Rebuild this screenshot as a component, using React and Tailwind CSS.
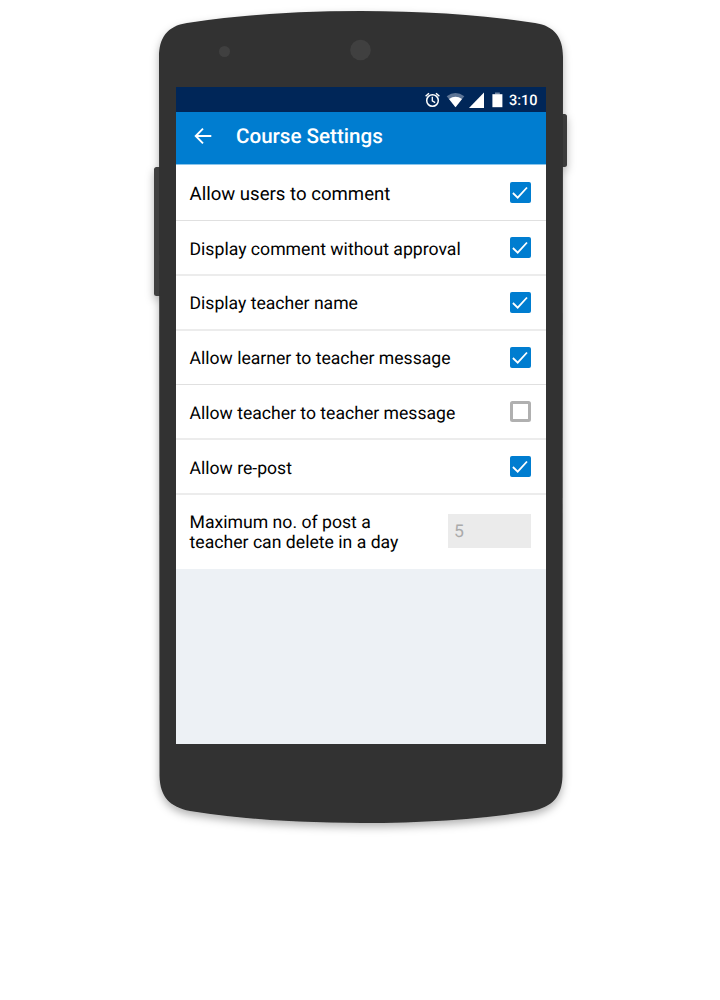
const settings = [
  { label: "Allow users to comment", checked: true, size: "h-14 border-b border-[#e0e0e0]", text: "mt-[2px] text-[18.600px]" },
  { label: "Display comment without approval", checked: true, size: "h-[55px] border-b-2 border-[#ececec]", text: "mt-[4px] text-[17.650px]" },
  { label: "Display teacher name", checked: true, size: "h-[55px] border-b-2 border-[#ececec]", text: "mt-[3px] text-[17.600px]" },
  { label: "Allow learner to teacher message", checked: true, size: "h-[54px] border-b border-[#e0e0e0]", text: "mt-[2px] text-[17.600px]" },
  { label: "Allow teacher to teacher message", checked: false, size: "h-[55px] border-b-2 border-[#ececec]", text: "mt-[4px] text-[17.600px]" },
  { label: "Allow re-post", checked: true, size: "h-[55px] border-b-2 border-[#ececec]", text: "mt-[4px] text-[17.600px]" },
];

function PhoneBody() {
  return (
    <svg className="absolute inset-0" width="720" height="1000" viewBox="0 0 720 1000" aria-hidden="true">
      <defs>
        <filter id="shadow" x="-20%" y="-20%" width="140%" height="140%">
          <feDropShadow dx="0" dy="4" stdDeviation="4" floodColor="#000" floodOpacity="0.3" />
        </filter>
      </defs>
      <g filter="url(#shadow)">
        <rect x="154" y="167" width="10" height="129" rx="2.500" fill="#404040" />
        <rect x="556" y="114" width="11" height="53" rx="2.500" fill="#3a3a3a" />
        <path
          d="M159 57C159 38 167 26 187 23Q265 11 361 11Q457 11 535 23C555 26 563 38 563 57L562.500 776C562 797 552 807 532 811Q457 823 361 823Q265 823 190 811C170 807 160 797 159.500 776Z"
          fill="#323232"
        />
      </g>
      <circle cx="224.500" cy="51.500" r="5.500" fill="#404040" />
      <circle cx="360.500" cy="50" r="10.300" fill="#404040" />
    </svg>
  );
}

function StatusBar() {
  return (
    <div className="flex h-[25px] items-center bg-[#002658] pl-[248px] text-white">
      <svg width="82" height="25" viewBox="0 0 82 25" aria-hidden="true">
        <g fill="none" stroke="#fff" strokeWidth="1.500">
          <circle cx="8.500" cy="13.500" r="5.800" />
          <path d="M8.300 9.800v4l2.900 1.800" strokeWidth="1.300" />
          <path d="M1.600 9.200L5 6.200M15.400 9.200L12 6.200" />
        </g>
        <path d="M22.700 9.300Q31.500 2.700 40.300 9.300L31.500 20.200Z" fill="#5d7596" />
        <path d="M25 12Q31.500 7.400 38 12L31.500 20.200Z" fill="#fff" />
        <path d="M60 5.500V21H45Z" fill="#fff" />
        <path d="M71 5.500h4.800v2H71z" fill="#7287a3" />
        <path d="M68.400 7.200h10V20.200h-10z" fill="#fff" />
      </svg>
      <span className="ml-[3px] mt-[4px] text-[14.500px] font-medium leading-none">3:10</span>
    </div>
  );
}

function Checkbox({ checked }) {
  if (!checked) {
    return <span role="checkbox" aria-checked="false" className="size-[21px] rounded-[2.500px] border-3 border-[#b0b0b0] bg-white" />;
  }
  return (
    <span role="checkbox" aria-checked="true" className="flex size-[21px] items-center justify-center rounded-[2px] bg-[#007dd0]">
      <svg width="21" height="21" viewBox="0 0 21 21" fill="none" stroke="#fff" strokeWidth="1.800" aria-hidden="true">
        <path d="M2.900 11L7.700 15.600L17 5.500" />
      </svg>
    </span>
  );
}

export default function App() {
  return (
    <div className="relative h-[1000px] w-[720px] overflow-hidden bg-white pl-[176px] pt-[87px] font-['Roboto',sans-serif] [text-rendering:geometricPrecision]">
      <PhoneBody />
      <main className="relative flex h-[657px] w-[370px] flex-col bg-[#edf1f5] text-black">
        <StatusBar />
        <header className="flex h-[53px] items-center border-b border-[#8ac5eb] bg-[#007dd0] pl-[18px] text-white">
          <svg width="18" height="18" viewBox="0 0 18 18" fill="none" stroke="#fff" strokeWidth="1.900" className="mt-[-4px]" aria-hidden="true">
            <path d="M17.300 9H2.300M9 1.600L1.700 9L9 16.400" />
          </svg>
          <h1 className="ml-6 mt-[-3px] whitespace-nowrap text-[20.600px] font-medium leading-6">Course Settings</h1>
        </header>
        {settings.map((s) => (
          <div key={s.label} className={`flex ${s.size} shrink-0 items-center justify-between bg-white pl-[13.500px] pr-[15px]`}>
            <span className={`whitespace-nowrap leading-6 ${s.text}`}>{s.label}</span>
            <Checkbox checked={s.checked} />
          </div>
        ))}
        <div className="flex h-[74px] shrink-0 items-center justify-between bg-white pl-[13.500px] pr-[15px]">
          <p className="mt-[2px] text-[17.650px] leading-5">
            Maximum no. of post a<br />teacher can delete in a day
          </p>
          <span className="mt-[-2px] flex h-[34px] w-[83px] items-center bg-[#ebebeb] pl-[6px] pt-[3px] text-[17.600px] text-[#aaaaaa]">5</span>
        </div>
      </main>
    </div>
  );
}
